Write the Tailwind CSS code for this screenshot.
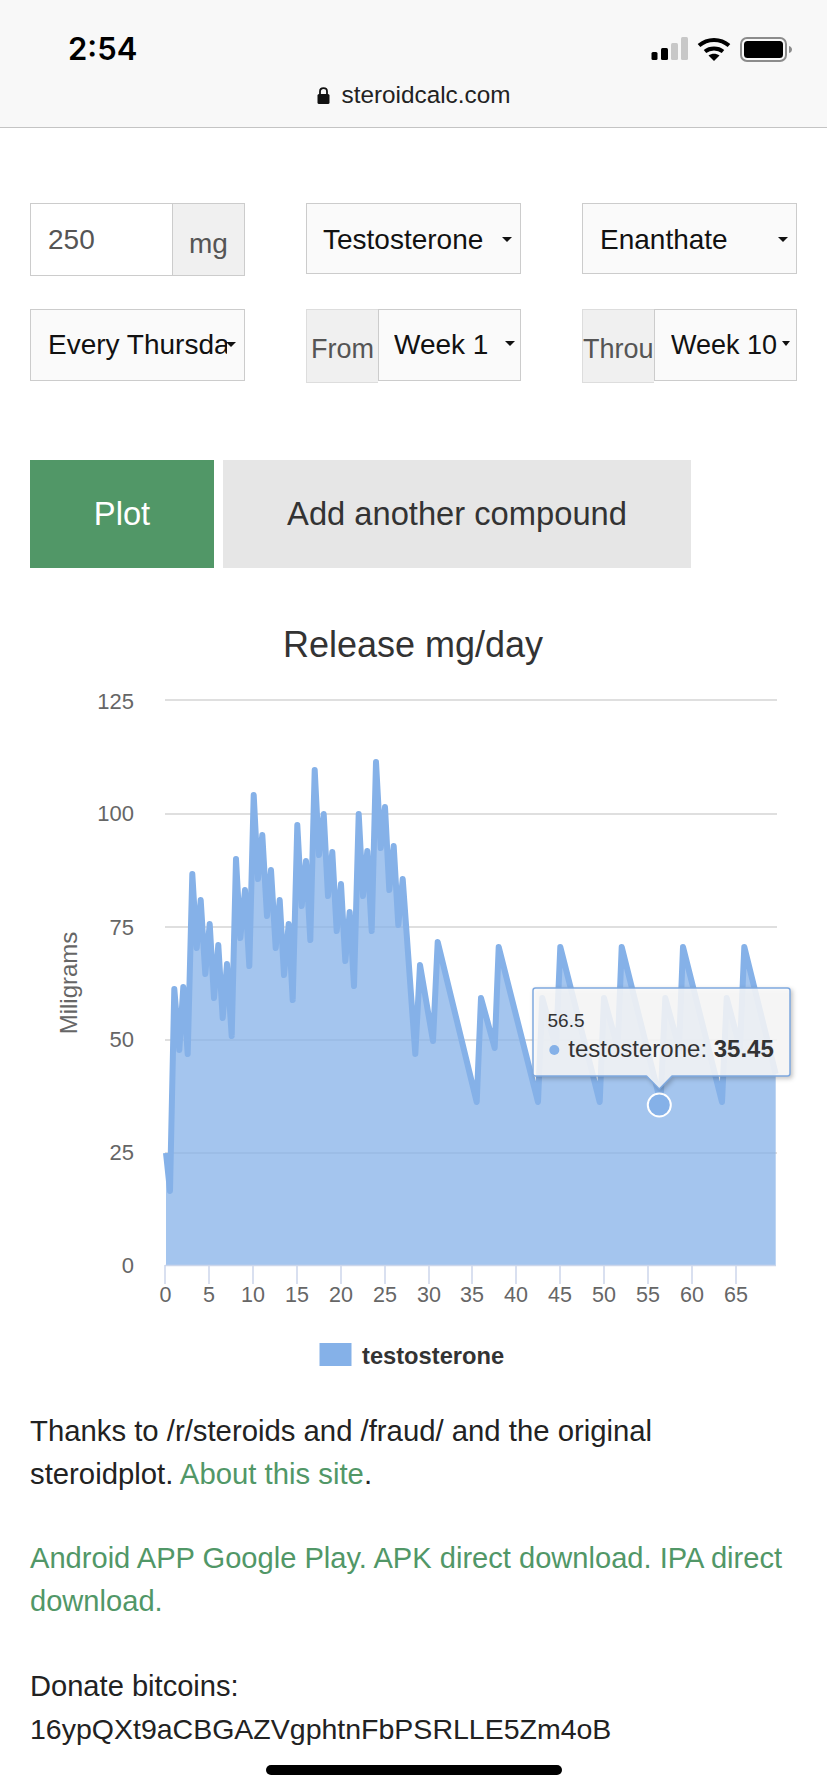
<!DOCTYPE html>
<html lang="en">
<head>
  <meta charset="UTF-8">
  <meta name="viewport" content="width=device-width, initial-scale=1.0">
  <title>Steroid calculator</title>
  <script src="https://cdn.jsdelivr.net/npm/@tailwindcss/browser@4"></script>
</head>
<body class="relative w-[827px] h-[1790px] overflow-hidden bg-white text-[#111] font-['Liberation_Sans',Arial,sans-serif]">

  <!-- browser bar -->
  <header class="h-[128px] bg-[#f8f8f8] border-b border-[#c4c4c4]">
    <div class="flex items-center justify-between pl-[68px] pr-[34px] pt-[25px] h-[73px]">
      <span class="font-['Inter',sans-serif] font-semibold text-[31px] leading-[26px] text-black">2:54</span>
      <div class="flex items-center">
        <svg width="38" height="24" viewBox="0 0 38 24" class="mr-[8px]">
          <rect x="0.5" y="15" width="6" height="8" rx="1.5" fill="#000"/>
          <rect x="10" y="11" width="7" height="12" rx="1.5" fill="#000"/>
          <rect x="20" y="6" width="7" height="17" rx="1.5" fill="#c8c8c8"/>
          <rect x="30" y="0" width="7" height="23" rx="1.5" fill="#c8c8c8"/>
        </svg>
        <svg width="34" height="24" viewBox="0 0 34 24" class="mr-[9px]">
          <path d="M2 8.5C10.500 1 23.500 1 32 8.500" fill="none" stroke="#000" stroke-width="4"/>
          <path d="M8 14.500C13 10.500 21 10.500 26 14.500" fill="none" stroke="#000" stroke-width="4"/>
          <path d="M11.500 18.500C15 16 19 16 22.500 18.500L17 24Z" fill="#000"/>
        </svg>
        <svg width="53" height="25" viewBox="0 0 53 25">
          <rect x="1" y="1" width="45" height="23" rx="6" fill="none" stroke="#8c8c8c" stroke-width="2"/>
          <rect x="4" y="4" width="39" height="17" rx="3.500" fill="#000"/>
          <path d="M49 9C51 9.500 52 11 52 12.500C52 14 51 15.500 49 16Z" fill="#8c8c8c"/>
        </svg>
      </div>
    </div>
    <div class="flex items-center justify-center gap-[12px] h-[44px]">
      <svg width="13" height="17" viewBox="0 0 13 17">
        <path d="M3 7V4.500C3 2.500 4.500 1.200 6.500 1.200C8.500 1.200 10 2.500 10 4.500V7" fill="none" stroke="#111" stroke-width="1.800"/>
        <rect x="0.500" y="7" width="12" height="10" rx="1.500" fill="#111"/>
      </svg>
      <span class="text-[24.300px] leading-[30px] text-[#222]">steroidcalc.com</span>
    </div>
  </header>

  <main>
    <!-- form -->
    <form class="grid grid-cols-3 gap-x-[61px] gap-y-[33px] items-start px-[30px] pt-[75px] text-[28px]">
      <div class="flex h-[73px] border-[1.5px] border-[#ccc]">
        <input value="250" class="w-[142px] pl-[17px] bg-white text-[#555] outline-none border-r-[1.5px] border-[#ccc]">
        <span class="flex-1 flex items-center justify-center pt-[9px] bg-[#f0f0f0] text-[#555]">mg</span>
      </div>
      <div class="relative">
        <select class="appearance-none w-full h-[71px] pt-[2px] pl-[16px] pr-[20px] bg-[#fafafa] border-[1.5px] border-[#ccc] rounded-none"><option>Testosterone</option></select>
        <span class="absolute right-[9px] top-[34px] border-x-[5px] border-x-transparent border-t-[5px] border-t-[#111]"></span>
      </div>
      <div class="relative">
        <select class="appearance-none w-full h-[71px] pt-[2px] pl-[17px] pr-[20px] bg-[#fafafa] border-[1.5px] border-[#ccc] rounded-none"><option>Enanthate</option></select>
        <span class="absolute right-[9px] top-[34px] border-x-[5px] border-x-transparent border-t-[5px] border-t-[#111]"></span>
      </div>

      <div class="relative">
        <select class="appearance-none w-full h-[72px] pl-[17px] pr-[17px] bg-[#fafafa] border-[1.5px] border-[#ccc] rounded-none"><option>Every Thursday</option></select>
        <span class="absolute right-[9px] top-[33px] border-x-[5px] border-x-transparent border-t-[5px] border-t-[#111]"></span>
      </div>
      <div class="flex items-start">
        <span class="flex items-center justify-center w-[72px] h-[74px] pt-[6px] bg-[#f0f0f0] border-[1.5px] border-r-0 border-[#ddd] text-[27px] text-[#555] overflow-hidden whitespace-nowrap">From</span>
        <div class="relative flex-1">
          <select class="appearance-none w-full h-[72px] pl-[15px] pr-[20px] bg-[#fafafa] border-[1.5px] border-[#ccc] rounded-none"><option>Week 1</option></select>
          <span class="absolute right-[6px] top-[32px] border-x-[5px] border-x-transparent border-t-[5px] border-t-[#111]"></span>
        </div>
      </div>
      <div class="flex items-start">
        <span class="flex items-center w-[72px] h-[74px] pt-[6px] bg-[#f0f0f0] border-[1.5px] border-r-0 border-[#ddd] text-[27px] text-[#555] overflow-hidden whitespace-nowrap">Through</span>
        <div class="relative flex-1">
          <select class="appearance-none w-full h-[72px] pl-[16px] pr-[12px] text-[27px] bg-[#fafafa] border-[1.5px] border-[#ccc] rounded-none"><option>Week 10</option></select>
          <span class="absolute right-[7px] top-[32px] border-x-[4px] border-x-transparent border-t-[5px] border-t-[#111]"></span>
        </div>
      </div>
    </form>

    <div class="flex gap-[9px] pl-[30px] mt-[77px] text-[32.700px]">
      <button class="w-[184px] h-[108px] bg-[#519767] text-white">Plot</button>
      <button class="w-[468px] h-[108px] bg-[#e6e6e6] text-[#333]">Add another compound</button>
    </div>

    <!-- chart -->
    <svg class="block mt-[33px] font-['Liberation_Sans',Arial,sans-serif]" width="827" height="780" viewBox="0 600 827 780">
      <text x="413" y="656" text-anchor="middle" font-size="36" fill="#333">Release mg/day</text>

      <g stroke="#d4d4d4" stroke-width="1.500">
        <line x1="165" y1="699" x2="777" y2="699"/>
        <line x1="165" y1="813" x2="777" y2="813"/>
        <line x1="165" y1="926" x2="777" y2="926"/>
        <line x1="165" y1="1039" x2="777" y2="1039"/>
        <line x1="165" y1="1152" x2="777" y2="1152"/>
      </g>

      <g font-size="22" fill="#666" text-anchor="end">
        <text x="134" y="708">125</text>
        <text x="134" y="820">100</text>
        <text x="134" y="934">75</text>
        <text x="134" y="1046">50</text>
        <text x="134" y="1159">25</text>
        <text x="134" y="1272">0</text>
      </g>
      <text transform="translate(77 982) rotate(-90)" text-anchor="middle" font-size="24" fill="#666">Miligrams</text>

      <path fill="#85b1e8" fill-opacity="0.75" d="M166 1152 170 1190 174.300 988 179.300 1049 183.300 986 187.700 1053 192.300 873 196.700 947 200.700 899 205.300 973 209.700 923 214 997 218.300 944 222.700 1017 227 963 231.700 1035 236 858 240.300 937 245 889 249.300 965 253.700 794 258 878 262.300 834 267 915 271 869 275.700 947 279.700 899 284 974 288.700 923 292.700 999 297.300 824 301.700 905 306 860 310.300 939 314.700 769 319 854 323.700 813 328 895 332.300 851 336.700 930 341 883 345.300 960 349.700 911 354 985 358.700 813 363 895 367.300 850 371.700 930 376 761 380.700 847 385 806 389.300 889 393.700 845 398.300 924 402.700 878 415.300 1053 420 964 433 1040 437.700 941 476.700 1101 481 997 494.700 1047 498.700 946 538 1101 542.300 997 556 1047 560.300 946 599.700 1101 604 997 617.700 1047 621.700 946 660.500 1101 665.300 997 679 1047 683 946 722 1101 726.700 997 740 1047 744.300 946 775.700 1073 775.700 1264 166 1264Z"/>
      <path fill="none" stroke="#85b1e8" stroke-width="6" stroke-linejoin="round" d="M166 1152 170 1190 174.300 988 179.300 1049 183.300 986 187.700 1053 192.300 873 196.700 947 200.700 899 205.300 973 209.700 923 214 997 218.300 944 222.700 1017 227 963 231.700 1035 236 858 240.300 937 245 889 249.300 965 253.700 794 258 878 262.300 834 267 915 271 869 275.700 947 279.700 899 284 974 288.700 923 292.700 999 297.300 824 301.700 905 306 860 310.300 939 314.700 769 319 854 323.700 813 328 895 332.300 851 336.700 930 341 883 345.300 960 349.700 911 354 985 358.700 813 363 895 367.300 850 371.700 930 376 761 380.700 847 385 806 389.300 889 393.700 845 398.300 924 402.700 878 415.300 1053 420 964 433 1040 437.700 941 476.700 1101 481 997 494.700 1047 498.700 946 538 1101 542.300 997 556 1047 560.300 946 599.700 1101 604 997 617.700 1047 621.700 946 660.500 1101 665.300 997 679 1047 683 946 722 1101 726.700 997 740 1047 744.300 946 775.700 1073"/>

      <!-- x axis -->
      <g stroke="#ccd6eb" stroke-width="1.500">
        <line x1="165" y1="1264.500" x2="776" y2="1264.500"/>
        <line x1="165" y1="1264" x2="165" y2="1283"/>
        <line x1="209" y1="1264" x2="209" y2="1283"/>
        <line x1="253" y1="1264" x2="253" y2="1283"/>
        <line x1="297" y1="1264" x2="297" y2="1283"/>
        <line x1="341" y1="1264" x2="341" y2="1283"/>
        <line x1="385" y1="1264" x2="385" y2="1283"/>
        <line x1="429" y1="1264" x2="429" y2="1283"/>
        <line x1="472" y1="1264" x2="472" y2="1283"/>
        <line x1="516" y1="1264" x2="516" y2="1283"/>
        <line x1="560" y1="1264" x2="560" y2="1283"/>
        <line x1="604" y1="1264" x2="604" y2="1283"/>
        <line x1="648" y1="1264" x2="648" y2="1283"/>
        <line x1="692" y1="1264" x2="692" y2="1283"/>
        <line x1="736" y1="1264" x2="736" y2="1283"/>
      </g>
      <g font-size="21.500" fill="#666" text-anchor="middle">
        <text x="165.500" y="1301">0</text>
        <text x="209" y="1301">5</text>
        <text x="253" y="1301">10</text>
        <text x="297" y="1301">15</text>
        <text x="341" y="1301">20</text>
        <text x="385" y="1301">25</text>
        <text x="429" y="1301">30</text>
        <text x="472" y="1301">35</text>
        <text x="516" y="1301">40</text>
        <text x="560" y="1301">45</text>
        <text x="604" y="1301">50</text>
        <text x="648" y="1301">55</text>
        <text x="692" y="1301">60</text>
        <text x="736" y="1301">65</text>
      </g>

      <!-- legend -->
      <rect x="319.500" y="1342" width="32" height="23" fill="#85b1e8"/>
      <text x="362" y="1363" font-size="23.700" font-weight="700" fill="#333">testosterone</text>

      <!-- hover point and tooltip -->
      <circle cx="659.300" cy="1104" r="11.500" fill="#85b1e8" stroke="#fff" stroke-width="2"/>
      <path class="drop-shadow-[2px_2px_2px_rgba(0,0,0,0.25)]" fill="#fdfdfd" fill-opacity="0.85" stroke="#7fa9df" stroke-width="1.500" stroke-linejoin="round" d="M535.500 987H787.500Q790 987 790 989.500V1072.500Q790 1075 787.500 1075H672L659.300 1088 646.500 1075H535.500Q533 1075 533 1072.500V989.500Q533 987 535.500 987Z"/>
      <text x="547.500" y="1026" font-size="19" fill="#333">56.5</text>
      <circle cx="554.300" cy="1049" r="5" fill="#85b1e8"/>
      <text x="568.300" y="1056" font-size="24" fill="#333">testosterone: <tspan font-weight="700">35.45</tspan></text>
    </svg>

    <!-- footer text -->
    <div class="flex flex-col gap-[41px] mt-[28px] pl-[30px] pr-[36px] leading-[43.400px] text-[#222]">
      <p class="text-[29.300px]">Thanks to /r/steroids and /fraud/ and the original steroidplot. <a href="#" class="text-[#519767]">About this site</a>.</p>
      <p class="text-[29.100px] text-[#519767]"><a href="#">Android APP Google Play.</a> <a href="#">APK direct download.</a> <a href="#">IPA direct download.</a></p>
      <p class="text-[29.100px]">Donate bitcoins:<br><span class="text-[28.500px]">16ypQXt9aCBGAZVgphtnFbPSRLLE5Zm4oB</span></p>
    </div>
  </main>

  <div class="absolute left-[266px] top-[1765px] w-[296px] h-[10px] rounded-full bg-black"></div>
</body>
</html>
